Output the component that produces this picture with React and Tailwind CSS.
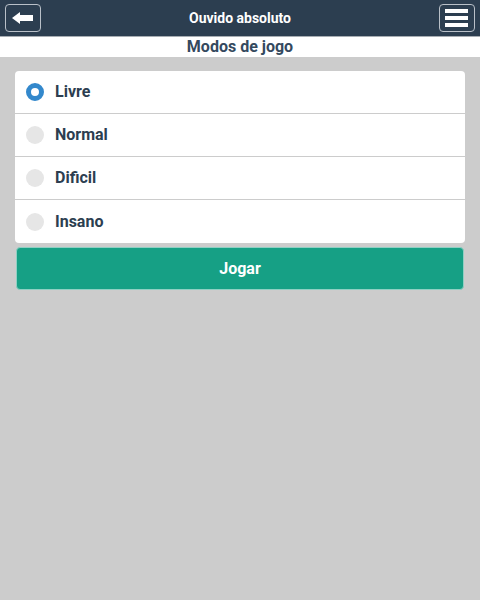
export default function App() {
  const modes = ["Livre", "Normal", "Dificil", "Insano"];
  return (
    <div className="w-[480px] h-[600px] bg-[#cccccc] flex flex-col" style={{ fontFamily: "Roboto, 'Liberation Sans', sans-serif" }}>
      <div className="h-[37px] bg-[#2c3e50] border-b border-[#a7adb3] flex items-center justify-between px-[5px]">
        <button className="w-[36px] h-[28px] border border-[#b9c0c8] rounded-[4px] flex items-center justify-center">
          <svg width="24" height="14" viewBox="0 0 24 14">
            <path d="M1 7 L9 1 L9 4 L22 4 L22 10 L9 10 L9 13 Z" fill="#fff" />
          </svg>
        </button>
        <div className="text-white font-bold text-[14px]">Ouvido absoluto</div>
        <button className="w-[36px] h-[28px] border border-[#b9c0c8] rounded-[4px] flex flex-col items-center justify-center gap-[3px]">
          <span className="block w-[23px] h-[4px] bg-white" />
          <span className="block w-[23px] h-[4px] bg-white" />
          <span className="block w-[23px] h-[4px] bg-white" />
        </button>
      </div>
      <div className="h-[20px] bg-white flex items-center justify-center text-[#34495e] font-bold text-[16px]">
        Modos de jogo
      </div>
      <div className="px-[15px] pt-[14px]">
        <div className="bg-white rounded-[4px] flex flex-col">
          {modes.map((m, i) => (
            <div key={m} className={"h-[43px] flex items-center pl-[11px] gap-[11px] " + (i < modes.length - 1 ? "border-b border-[#cccccc]" : "")}>
              {i === 0 ? (
                <span className="w-[18px] h-[18px] rounded-full border-[5px] border-[#3388cc] bg-white" />
              ) : (
                <span className="w-[18px] h-[18px] rounded-full bg-[#e6e6e6]" />
              )}
              <span className="text-[#2c3e50] font-bold text-[16px]">{m}</span>
            </div>
          ))}
        </div>
        <button className="mt-[4px] mx-[1px] w-[448px] h-[43px] bg-[#16a085] border border-[#8fd0c3] rounded-[4px] text-white font-bold text-[16px]">
          Jogar
        </button>
      </div>
    </div>
  );
}
